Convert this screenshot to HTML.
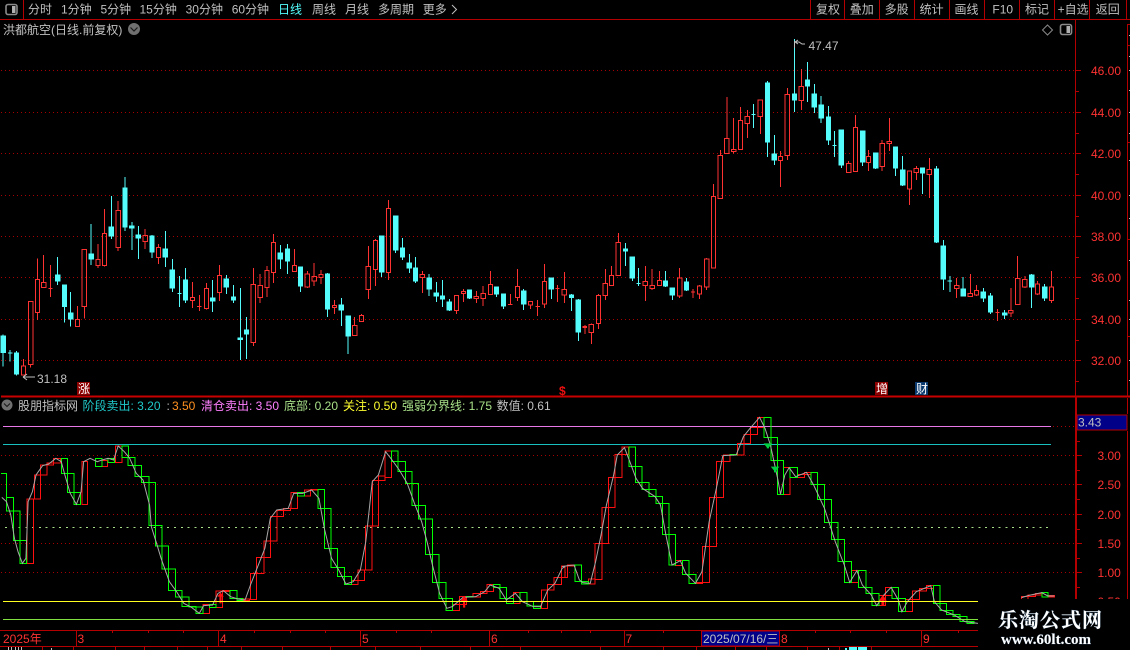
<!DOCTYPE html>
<html lang="zh"><head><meta charset="utf-8"><title>洪都航空</title>
<style>
html,body{margin:0;padding:0;background:#000;width:1130px;height:650px;overflow:hidden}
svg{display:block;position:absolute;left:0;top:0}
path,line,rect,polyline,circle{vector-effect:non-scaling-stroke}
text{font-family:"Liberation Sans","WenQuanYi Zen Hei","Noto Sans CJK SC",sans-serif;font-size:12px;fill:#c0c0c0}
.r{fill:#ff3232}
.g{stroke:#a80000;stroke-width:1;stroke-dasharray:1 3;fill:none}
.s{stroke:#b40000;stroke-width:1;fill:none}
.cr{fill:none;stroke:#ff3232;stroke-width:1}
.cc{fill:#54fcfc;stroke:#54fcfc;stroke-width:1}
.sr{fill:none;stroke:#ff0f0f;stroke-width:1}
.sg{fill:none;stroke:#00ff00;stroke-width:1}
.ln{fill:none;stroke:#a8a8a8;stroke-width:1}
</style></head><body>
<svg width="1130" height="650" viewBox="0 0 1130 650" xmlns="http://www.w3.org/2000/svg">
<rect width="1130" height="650" fill="#000"/>
<g shape-rendering="crispEdges">
<path class="s" d="M0 19.5H1130M23.5 0V19M810.5 0V19M844.5 0V19M879.5 0V19M914.5 0V19M949.5 0V19M984.5 0V19M1019.5 0V19M1054.5 0V19M1089.5 0V19M1126.5 0V19"/>
<path class="g" d="M1 70.5H1075M1 112.5H1075M1 153.5H1075M1 195.5H1075M1 236.5H1075M1 277.5H1075M1 319.5H1075M1 360.5H1075M1 455.5H1075M1 484.5H1075M1 514.5H1075M1 543.5H1075M1 572.5H1075"/>
<path d="M1 396.5H1130" stroke="#c80000" stroke-width="2" fill="none"/>
<path d="M1075.5 19V396" class="s"/>
<path d="M1076 396V599" stroke="#b40000" stroke-width="2" fill="none"/>
<path class="s" d="M1127.5 25V396M1127.5 398V414M1127.5 431V599M1127 24.5H1130M1127 45.5H1130M1127 142.5H1130M1127 239.5H1130M1127 336.5H1130"/>
<path d="M1129 35.5h1M1129 56.5h1M1129 70.5h1M1129 90.5h1M1129 112.5h1M1129 133.5h1M1129 160.5h1M1129 195.5h1M1129 218.5h1M1129 260.5h1M1129 300.5h1M1129 319.5h1M1129 360.5h1M1129 380.5h1" stroke="#c0c0c0" fill="none"/>
<path class="s" d="M1076 70.5h5M1076 91.5h3M1076 112.5h5M1076 133.5h3M1076 153.5h5M1076 174.5h3M1076 195.5h5M1076 216.5h3M1076 236.5h5M1076 257.5h3M1076 277.5h5M1076 298.5h3M1076 319.5h5M1076 340.5h3M1076 360.5h5M1076 381.5h3M1077 441.5h3M1077 455.5h5M1077 470.5h3M1077 484.5h5M1077 499.5h3M1077 514.5h5M1077 529.5h3M1077 543.5h5M1077 558.5h3M1077 572.5h5M1077 587.5h3"/>

<g transform="translate(0,200) scale(.36036,.33333)">
<path class="cr" d="M59 498h12v27h-12zM65 477V498M79 304h12v190h-12zM85 494V503M98 238h12v100h-12zM104 175V238M104 338V360M115 247h12v16h-12zM121 165V247M134 265h12M140 195V291M209 358h12v22h-12zM215 318V358M228 148h12v172h-12zM234 320V356M266 178h12v19h-12zM272 132V178M272 197V204M284 100h12v97h-12zM290 27V100M290 197V200M322 31h12v112h-12zM328 3V31M328 143V153M397 106h12v19h-12zM403 87V106M403 125V147M434 142h12v30h-12zM440 132V142M440 172V192M528 292h12v10h-12zM534 246V292M534 302V324M547 320h12M553 285V333M567 265h12v61h-12zM573 249V265M573 326V329M603 226h12v51h-12zM609 195V226M609 277V303M697 253h12v175h-12zM703 204V253M703 428V438M716 256h12v37h-12zM722 222V256M722 293V309M735 211h12v52h-12zM741 198V211M741 263V291M753 127h12v91h-12zM759 102V127M759 218V249M811 196h12v19h-12zM817 147V196M847 222h12v39h-12zM853 213V222M853 261V264M866 229h12v14h-12zM872 189V229M872 243V258M885 223h12v10h-12zM891 210V223M891 233V252M922 316h12v7h-12zM928 300V316M928 323V342M978 376h12v31h-12zM984 351V376M997 346h12v19h-12zM1003 342V346M1016 199h12v70h-12zM1022 138V199M1022 269V297M1036 121h12v88h-12zM1042 117V121M1042 209V258M1072 25h12v193h-12zM1078 0V25M1078 218V240M1166 223h12v10h-12zM1172 213V223M1172 233V279M1261 286h12v45h-12zM1267 331V342M1280 274h12v7h-12zM1286 267V274M1286 281V306M1316 289h12v7h-12zM1322 273V289M1322 296V309M1335 280h12v16h-12zM1341 258V280M1341 296V318M1355 253h12v31h-12zM1361 213V253M1361 284V285M1410 313h12M1416 282V315M1430 259h12v33h-12zM1436 207V259M1436 292V303M1466 304h12v11h-12zM1472 303V304M1472 315V327M1486 320h12M1492 300V348M1505 244h12v68h-12zM1511 192V244M1511 312V324M1541 265h12M1547 255V306M1560 268h12v17h-12zM1566 216V268M1566 285V309"/>
<path class="cc" d="M3 408h12v50h-12zM9 403V500M22 459h12M28 450V485M40 459h12v63h-12zM46 453V527M154 225h12v18h-12zM160 171V255M173 255h12v65h-12zM179 320V368M190 339h12v18h-12zM196 276V380M247 162h12v15h-12zM253 72V195M303 81h12v27h-12zM309 -12V117M341 -36h12v117h-12zM347 -69V93M360 78h12v6h-12zM366 66V150M378 105h12v9h-12zM384 78V177M416 108h12v48h-12zM422 105V174M453 147h12v24h-12zM459 93V201M472 210h12v54h-12zM478 177V276M492 280h12M498 228V321M509 240h12v60h-12zM515 204V309M584 294h12v9h-12zM590 240V336M622 237h12v24h-12zM628 225V282M642 291h12v9h-12zM648 255V309M661 414h12v5h-12zM667 264V480M678 390h12v12h-12zM684 351V477M772 159h12v18h-12zM778 135V207M792 147h12v36h-12zM798 132V222M828 201h12v57h-12zM834 258V276M903 222h12v105h-12zM909 219V351M941 315h12v15h-12zM947 294V378M960 348h12v60h-12zM966 408V462M1053 108h12v108h-12zM1059 216V231M1092 48h12v102h-12zM1098 150V159M1111 144h12v27h-12zM1117 114V180M1130 189h12v15h-12zM1136 162V219M1147 204h12v39h-12zM1153 171V249M1185 234h12v33h-12zM1191 222V288M1205 279h12v9h-12zM1211 246V306M1222 288h12v9h-12zM1228 240V321M1241 306h12v24h-12zM1247 297V333M1297 270h12v24h-12zM1303 294V297M1372 261h12v21h-12zM1378 282V291M1391 282h12v36h-12zM1397 318V327M1447 273h12v39h-12zM1453 267V330M1524 234h12v33h-12zM1530 267V297"/>
</g>

<g transform="translate(565,200) scale(.36036,.33333)">
<path class="cr" d="M49 383h12M49 380h12M55 375V402M67 373h12v25h-12zM73 370V373M73 398V432M87 286h12v85h-12zM93 282V286M93 371V387M106 250h12v37h-12zM112 207V250M112 287V300M123 226h12v31h-12zM129 198V226M142 127h12v100h-12zM148 99V127M217 244h12v13h-12zM223 198V244M223 257V303M236 256h12v10h-12zM242 207V256M242 266V270M256 241h12v16h-12zM262 213V241M312 234h12v54h-12zM318 204V234M318 288V294M349 276h12M355 267V294M367 258h12v24h-12zM373 255V258M373 282V297M387 177h12v84h-12zM393 174V177M393 261V270M1081 256h12v10h-12zM1087 234V256M1087 266V294M1119 280h12v10h-12zM1125 222V280M1136 271h12v14h-12zM1142 255V271M1142 285V288M1194 337h12M1200 327V363M1231 331h12v8h-12zM1237 264V331M1237 339V351M1250 235h12v79h-12zM1256 168V235M1270 238h12v23h-12zM1276 228V238M1276 261V264M1305 252h12v30h-12zM1311 243V252M1311 282V285M1344 261h12v41h-12zM1350 213V261M1350 302V309"/>
<path class="cc" d="M12 285h12v8h-12zM18 282V333M31 300h12v96h-12zM37 297V423M162 147h12v6h-12zM168 129V198M181 171h12v63h-12zM187 234V243M198 250h12M204 204V258M273 243h12v15h-12zM279 213V261M292 264h12v21h-12zM298 285V300M331 246h12v24h-12zM337 234V273M1044 138h12v99h-12zM1050 120V270M1062 243h12M1068 228V276M1099 267h12v21h-12zM1105 231V288M1155 276h12v18h-12zM1161 264V306M1175 288h12v48h-12zM1181 279V342M1214 339h12v6h-12zM1220 330V357M1289 225h12v36h-12zM1295 222V324M1325 261h12v33h-12zM1331 252V303"/>
</g>

<g transform="translate(565,0) scale(.36036,.33333)">
<path class="cr" d="M406 590h12v214h-12zM412 552V590M425 466h12v130h-12zM431 450V466M443 415h12v46h-12zM449 291V415M462 448h12v6h-12zM468 354V448M468 454V460M481 361h12v88h-12zM487 321V361M500 349h12v22h-12zM506 330V349M506 371V414M536 300h12v50h-12zM542 350V402M592 469h12v13h-12zM598 453V469M598 482V561M611 283h12v183h-12zM617 264V283M617 466V480M650 259h12v43h-12zM656 207V259M656 302V330M781 490h12v28h-12zM787 483V490M800 382h12v133h-12zM806 345V382M836 469h12v19h-12zM842 450V469M842 488V513M874 430h12v70h-12zM880 420V430M880 500V513M894 424h12v6h-12zM900 354V424M900 430V453M950 513h12v54h-12zM956 567V615M969 505h12v12h-12zM975 498V505M975 517V540M1005 508h12v16h-12zM1011 474V508M1011 524V594"/>
<path class="cc" d="M517 343h12M523 312V384M556 249h12v177h-12zM562 243V471M575 462h12v18h-12zM581 405V495M631 282h12v18h-12zM637 117V336M667 240h12v18h-12zM673 186V306M686 282h12v39h-12zM692 252V339M705 315h12v39h-12zM711 288V369M725 351h12v69h-12zM731 318V435M742 436h12M748 393V471M761 390h12v105h-12zM767 495V504M820 393h12v93h-12zM826 486V498M856 459h12v45h-12zM862 504V507M911 441h12v63h-12zM917 504V528M931 510h12v45h-12zM937 468V558M986 504h12v15h-12zM992 519V582M1025 507h12v219h-12zM1031 498V729"/>
</g>

<rect x="77" y="382" width="13" height="13" fill="#8c0000"/>
<rect x="875" y="382" width="13" height="13" fill="#8c0000"/>
<rect x="915" y="382" width="13" height="13" fill="#0a3a6e"/>

<path d="M3 426.5H1051" stroke="#e878e8" fill="none"/>
<path d="M1053 426.5H1075" class="g"/>
<path d="M3 444.5H1051" stroke="#18c0c0" fill="none"/>
<path d="M5 527.5H1052" stroke="#a8e088" stroke-dasharray="2 4.76" fill="none"/>

<g transform="translate(0,395) scale(.36036,.33333)">
<path class="sr" d="M75 312H93V505H75zM96 240H113V312H96zM113 210H130V240H113zM130 204H149V210H130zM149 190H168V204H149zM227 199H243V328H227zM283 197H299V215H283zM320 153H338V203H320zM563 628H582V656H563zM600 588H618V638H600zM618 586H638V590H618zM675 612H693V617H675zM695 535H712V614H695zM712 487H732V535H712zM732 438H750V487H732zM750 365H768V438H750zM768 347H787V365H768zM787 340H806V347H787zM808 293H826V340H808zM845 285H862V303H845zM862 283H882V285H862zM975 556H994V568H975zM994 525H1012V556H994zM1014 393H1032V525H1014zM1033 256H1050V393H1033zM1050 243H1068V256H1050zM1068 168H1087V247H1068zM1255 628H1275V647H1255zM1275 605H1295V628H1275zM1313 596H1333V606H1313zM1333 590H1351V596H1333zM1351 568H1370V590H1351zM1425 592H1443V626H1425zM1502 585H1520V640H1502zM1520 568H1538V585H1520zM1538 547H1558V568H1538zM1558 515H1568V547H1558z"/>
<path class="sg" d="M3 235H18V307M18 307H37V348H18zM37 348H55V436H37zM55 436H74V505H55zM170 190H188V235H170zM188 235H205V292H188zM205 292H224V328H205zM265 190H283V215H265zM300 190H318V203H300zM338 153H357V187H338zM355 187H375V211H355zM375 211H393V244H375zM393 244H413V262H393zM413 262H432V392H413zM432 392H450V453H432zM450 453H467V522H450zM467 522H487V586H467zM487 586H505V606H487zM505 606H524V634H505zM524 634H544V636H524zM544 636H563V656H544zM582 628H600V638H582zM638 587H657V611H638zM657 611H675V617H657zM826 293H845V303H826zM882 283H900V340H882zM900 340H918V460H900zM918 460H936V517H918zM936 517H956V545H936zM956 545H975V568H956zM1087 168H1105V199H1087zM1105 199H1125V229H1105zM1125 229H1143V265H1125zM1143 265H1162V332H1143zM1162 332H1181V372H1162zM1181 372H1200V478H1181zM1200 478H1218V562H1200zM1218 562H1237V611H1218zM1237 611H1255V647H1237zM1295 604H1313V606H1295zM1370 568H1387V577H1370zM1387 577H1405V610H1387zM1405 610H1425V626H1405zM1443 592H1462V620H1443zM1462 620H1480V633H1462zM1480 633H1500V640H1480z"/>
</g>
<g transform="translate(565,395) scale(.36036,.33333)">
<path class="sr" d="M-10 513H7V547H-10zM7 510H26V513H7zM65 552H83V567H65zM83 445H102V553H83zM102 337H121V445H102zM121 247H139V337H121zM139 179H158V247H139zM158 156H176V179H158zM307 497H326V512H307zM364 562H382V565H364zM382 454H401V563H382zM401 307H420V454H401zM420 199H440V307H420zM440 180H458V199H440zM478 145H497V180H478zM497 118H515V145H497zM515 97H534V118H515zM534 67H552V97H534zM606 217H625V298H606zM645 238H664V247H645zM664 232H682V238H664zM795 526H815V563H795zM871 602H890V632H871zM890 577H907V602H890zM945 614H964V650H945zM964 588H984V614H964zM984 580H1003V588H984zM1003 572H1022V580H1003zM1267 604H1285V613H1267zM1285 600H1305V604H1285zM1305 595H1323V600H1305zM1340 601H1358V606H1340z"/>
<path class="sg" d="M28 510H46V560H28zM46 560H65V567H46zM178 156H196V214H178zM196 214H214V262H196zM214 262H233V283H214zM233 283H252V304H233zM252 304H270V325H252zM270 325H288V418H270zM288 418H307V510H288zM326 497H344V538H326zM344 538H364V565H344zM458 179H477V180H458zM552 67H571V128H552zM571 128H589V196H571zM589 196H606V298H589zM625 217H645V247H625zM682 232H701V268H682zM701 268H720V314H701zM720 314H739V382H720zM739 382H757V433H739zM757 433H776V499H757zM776 499H795V563H776zM815 526H835V577H815zM835 577H852V595H835zM852 595H871V632H852zM907 577H925V610H907zM925 610H945V650H925zM1022 572H1040V625H1022zM1040 625H1059V646H1040zM1059 646H1077V658H1059zM1077 658H1096V665H1077zM1096 665H1115V680H1096zM1115 680H1135V685H1115zM1323 592H1340V606H1323z"/>
</g>
</g>

<g transform="translate(0,395) scale(.36036,.33333)">
<polyline class="ln" points="5,307 18,320 30,360 40,430 50,470 62,505 72,490 78,320 90,290 100,240 118,212 135,207 155,190 170,200 180,240 195,295 212,328 225,290 232,200 250,190 270,200 283,195 300,190 315,195 328,153 345,170 360,190 378,235 397,255 415,330 420,395 433,440 447,490 470,560 490,590 510,625 530,636 553,655 565,632 590,630 605,595 620,587 640,605 660,612 680,615 695,570 715,515 735,460 750,370 768,345 800,340 815,295 840,295 865,285 885,310 900,400 920,490 940,525 960,567 980,560 1000,525 1015,440 1033,260 1050,240 1070,170 1088,195 1108,225 1130,265 1150,325 1170,380 1185,440 1200,510 1220,595 1240,640 1255,635 1285,607 1320,605 1345,590 1360,570 1385,580 1405,615 1430,595 1450,620 1480,635 1500,635 1520,585 1540,565 1560,520 1568,515"/>
<path d="M612 592l9 13h-6v20h-6v-20h-6zM1288 603l10 15h-7v20h-6v-20h-7z" fill="#ff0f0f"/>
</g>
<g transform="translate(565,395) scale(.36036,.33333)">
<polyline class="ln" points="-8,515 8,512 25,510 40,555 50,563 70,565 85,500 100,420 115,330 135,240 145,180 165,158 180,200 197,250 215,280 250,305 265,330 280,420 297,510 320,497 335,535 362,565 380,530 400,380 420,280 438,182 475,180 495,125 515,98 540,67 555,100 570,150 590,250 598,298 610,240 622,218 640,245 670,232 690,270 720,340 750,440 775,510 790,562 810,527 825,570 850,600 865,632 885,600 905,577 925,615 935,650 950,620 975,590 1015,572 1025,620 1045,645 1080,660 1110,680 1146,685"/>
<polyline class="ln" points="1267,608 1285,602 1305,597 1323,593 1340,603 1358,603"/>
<path d="M882 600l11 17h-7v16h-8v-16h-7z" fill="#ff0f0f"/>
<path d="M551 145h24l-9 12v3h-6v-3zM571 215h24l-9 12v5h-6v-5z" fill="#00d040"/>
</g>

<path d="M3 601.5H978" stroke="#ffff20" fill="none" shape-rendering="crispEdges"/>
<path d="M3 619.5H978" stroke="#80e040" fill="none" shape-rendering="crispEdges"/>

<g shape-rendering="crispEdges">
<path class="s" d="M0 630.5H978M0 646.5H978M76.5 631V646M218.5 631V646M360.5 631V646M489.5 631V646M624.5 631V646M921.5 631V646M112.5 631v2M148.5 631v2M183.5 631v2M254.5 631v2M290.5 631v2M325.5 631v2M396.5 631v2M431.5 631v2M528.5 631v2M561.5 631v2M590.5 631v2M663.5 631v2M815.5 631v2M850.5 631v2M886.5 631v2M958.5 631v2"/>
<path class="s" d="M42.5 647V650M73.5 647V650M115.5 647V650M144.5 647V650M177.5 647V650M207.5 647V650M241.5 647V650M282.5 647V650M330.5 647V650M375.5 647V650M420.5 647V650M470.5 647V650M520.5 647V650M600.5 647V650M663.5 647V650M696.5 647V650M735.5 647V650M766.5 647V650M807.5 647V650M839.5 647V650M871.5 647V650"/>
<rect x="701.5" y="631" width="78" height="15" fill="#000088" stroke="#b40000"/>
<path d="M8 647h1v3h-1zM11 647h1v3h-1zM15 647h1v3h-1zM18 647h1v3h-1zM21 647h1v3h-1zM51 648h1v2h-1zM828 648h1v2h-1z" fill="#c0c0c0"/>
<path d="M845 648h2v2h-2zM849 647h8v3h-8zM858 647h9v3h-9z" fill="#54fcfc"/>
<rect x="1077" y="415" width="50" height="15" fill="#000088" stroke="#b40000"/>
</g>

<!-- top bar -->
<rect x="6" y="4.5" width="11" height="10" rx="2" fill="#000" stroke="#8a8a8a" stroke-width="1.6"/>
<rect x="12" y="6" width="3.5" height="7" fill="#b0b0b0"/>
<text x="28" y="13.5">分时</text>
<text x="61" y="13.5">1分钟</text>
<text x="100.5" y="13.5">5分钟</text>
<text x="139.5" y="13.5">15分钟</text>
<text x="185.6" y="13.5">30分钟</text>
<text x="231.7" y="13.5">60分钟</text>
<text x="278" y="13.5" style="fill:#54fcfc">日线</text>
<text x="312" y="13.5">周线</text>
<text x="345" y="13.5">月线</text>
<text x="378" y="13.5">多周期</text>
<text x="422.7" y="13.5">更多</text>
<path d="M452 5l4.5 4.5-4.5 4.5" fill="none" stroke="#c0c0c0"/>
<text x="816" y="13.5">复权</text>
<text x="849.7" y="13.5">叠加</text>
<text x="884.6" y="13.5">多股</text>
<text x="919.6" y="13.5">统计</text>
<text x="954.5" y="13.5">画线</text>
<text x="992.4" y="13.5">F10</text>
<text x="1025" y="13.5">标记</text>
<text x="1057.6" y="13.5">+自选</text>
<text x="1095.8" y="13.5">返回</text>

<!-- title -->
<text x="3" y="34">洪都航空(日线.前复权)</text>
<circle cx="134" cy="29" r="6" fill="#707070"/>
<path d="M130.5 27.5l3.5 3.5 3.5-3.5" fill="none" stroke="#1a1a1a" stroke-width="1.2"/>
<path d="M1047.5 25l5 5-5 5-5-5z" fill="none" stroke="#8a8a8a"/>
<rect x="1060.5" y="24.5" width="11" height="10" rx="2" fill="#000" stroke="#8a8a8a" stroke-width="1.6"/>
<rect x="1066.5" y="26" width="3.5" height="7" fill="#b0b0b0"/>

<!-- price labels -->
<path d="M794.5 41V48" stroke="#c0c0c0"/>
<path d="M795 42l3-2M795 42l3 2M795 42h4l3 2h3" fill="none" stroke="#c0c0c0"/>
<text x="808.5" y="50">47.47</text>
<path d="M23 377l4-3M23 377l4 3M23 377h12" fill="none" stroke="#c0c0c0"/>
<text x="37" y="383">31.18</text>
<text x="1091" y="75" class="r">46.00</text>
<text x="1091" y="117" class="r">44.00</text>
<text x="1091" y="158" class="r">42.00</text>
<text x="1091" y="200" class="r">40.00</text>
<text x="1091" y="241" class="r">38.00</text>
<text x="1091" y="282" class="r">36.00</text>
<text x="1091" y="324" class="r">34.00</text>
<text x="1091" y="365" class="r">32.00</text>
<text x="78" y="393" style="font-size:12px;fill:#fff">涨</text>
<text x="876" y="393" style="font-size:12px;fill:#fff">增</text>
<text x="916" y="393" style="font-size:12px;fill:#fff">财</text>
<text x="559" y="395" style="font-size:12px;font-weight:bold;fill:#f01010">$</text>

<!-- indicator header -->
<circle cx="7" cy="405" r="5.5" fill="#707070"/>
<path d="M4 403.5l3 3 3-3" fill="none" stroke="#1a1a1a" stroke-width="1.1"/>
<text x="18" y="410">股朋指标网</text>
<text x="82.5" y="410" style="fill:#20c8c8">阶段卖出: 3.20</text>
<text x="166.5" y="410">:</text>
<text x="172" y="410" style="fill:#ff9020">3.50</text>
<text x="201" y="410" style="fill:#ff80ff">清仓卖出: 3.50</text>
<text x="284" y="410" style="fill:#a8e088">底部: 0.20</text>
<text x="343" y="410" style="fill:#ffff30">关注: 0.50</text>
<text x="402" y="410" style="fill:#a8e088">强弱分界线: 1.75</text>
<text x="496.6" y="410">数值: 0.61</text>

<text x="1078" y="426.5">3.43</text>
<text x="1097.5" y="460" class="r">3.00</text>
<text x="1097.5" y="489" class="r">2.50</text>
<text x="1097.5" y="519" class="r">2.00</text>
<text x="1097.5" y="548" class="r">1.50</text>
<text x="1097.5" y="577" class="r">1.00</text>
<text x="1097.5" y="606" class="r">0.50</text>

<!-- bottom axis -->
<text x="3" y="643" class="r">2025年</text>
<text x="77.5" y="643" class="r">3</text>
<text x="220" y="643" class="r">4</text>
<text x="362" y="643" class="r">5</text>
<text x="491" y="643" class="r">6</text>
<text x="625.5" y="643" class="r">7</text>
<text x="703" y="643">2025/07/16/三</text>
<text x="781" y="643" class="r">8</text>
<text x="923" y="643" class="r">9</text>

<!-- watermark -->
<rect x="978" y="599" width="152" height="51" fill="#000"/>
<text x="998" y="627" style="font-family:'Noto Serif CJK SC','Liberation Serif',serif;font-size:20px;font-weight:bold;fill:#fff;letter-spacing:1px;paint-order:stroke;stroke:#34506a;stroke-width:.6px">乐淘公式网</text>
<text x="1001" y="644" textLength="90" style="font-family:'Liberation Serif',serif;font-size:15px;font-weight:bold;fill:#fff;paint-order:stroke;stroke:#34506a;stroke-width:.5px">www.60lt.com</text>
</svg>
</body></html>
